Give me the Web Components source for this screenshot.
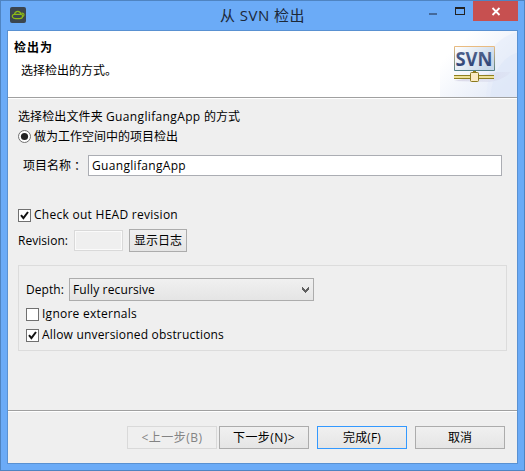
<!DOCTYPE html>
<html lang="zh-CN">
<head>
<meta charset="utf-8">
<title>从 SVN 检出</title>
<style>
body{margin:0;width:525px;height:471px;overflow:hidden;font:12px/16px "Open Sans","Noto Sans CJK SC",sans-serif;color:#000}
</style>
</head>
<body>
<checkout-dialog></checkout-dialog>
<script>
function define(name, html, setup) {
  const t = document.createElement('template');
  t.innerHTML = html;
  customElements.define(name, class extends HTMLElement {
    connectedCallback() {
      if (this.shadowRoot) return;
      this.attachShadow({mode: 'open'}).append(t.content.cloneNode(true));
      if (setup) setup(this, this.shadowRoot);
    }
  });
}

// A single line of text, tracked so that it fills the width given in its "w" attribute.
define('ui-label', `<style>
:host{display:block;white-space:pre;flex:none;height:16px}
span{display:inline-block}
</style><span><slot></slot></span>`, (host, root) => {
  const w = +host.getAttribute('w');
  if (!w) return;
  const span = root.querySelector('span');
  const extra = w - span.getBoundingClientRect().width;
  span.style.letterSpacing = extra / host.textContent.length + 'px';
  host.style.width = w + 'px';
});

define('ui-button', `<style>
:host{display:flex;flex:none;box-sizing:border-box;width:90px;height:23px;border:1px solid #acacac;
background:linear-gradient(#f0f0f0,#e5e5e5);align-items:center;justify-content:center}
:host([primary]){border-color:#3399ff}
:host([disabled]){border-color:#d9d9d9;background:#efefef;color:#838383}
</style><slot></slot>`);

define('ui-check', `<style>
:host{display:flex;height:16px;align-items:center;gap:3px}
i{display:block;box-sizing:border-box;width:13px;height:13px;border:1px solid #707070;background:#fff;flex:none}
svg{display:none;width:11px;height:11px}
:host([checked]) svg{display:block}
</style><i><svg viewBox="0 0 11 11"><path d="M2 5.2 4.4 8.2 9 2" fill="none" stroke="#111" stroke-width="2"/></svg></i><slot></slot>`);

define('ui-radio', `<style>
:host{display:flex;height:16px;align-items:center;gap:3px}
svg{display:block;width:13px;height:13px;flex:none;margin-top:-2px}
</style><svg viewBox="0 0 13 13"><circle cx="6.5" cy="6.5" r="6" fill="#fff" stroke="#707070"/><circle cx="6.5" cy="6.5" r="3.6" fill="#222"/></svg><slot></slot>`);

define('ui-input', `<style>
:host{display:flex;flex:none;box-sizing:border-box;height:21px;border:1px solid #abadb3;background:#fff;padding-left:3px;align-items:center}
:host([disabled]){border-color:#d9d9d9;background:#efefef;box-shadow:inset 0 0 0 1px #fafafa}
</style><slot></slot>`);

define('ui-combo', `<style>
:host{display:flex;flex:none;box-sizing:border-box;width:245px;height:23px;border:1px solid #acacac;padding:0 4px 0 3px;
background:linear-gradient(#f0f0f0,#e5e5e5);align-items:center;justify-content:space-between}
svg{display:block;width:7px;height:6px}
</style><slot></slot><svg viewBox="0 0 7 6"><path d="M0 0h1v1h1v1h1v1h1V2h1V1h1V0h1v3H6v1H5v1H4v1H3V5H2V4H1V3H0z" fill="#606060"/></svg>`);

define('app-icon', `<style>:host,svg{display:block;width:16px;height:16px}</style>
<svg viewBox="0 0 16 16"><rect width="16" height="16" rx="2" fill="#3b4650"/>
<g fill="none" stroke="#8dbb16" stroke-width="1.2"><path d="M4.3 7.4C2.2 7.7 1.9 9.2 2.6 10.2c.6 1 1.700 1.400 3 1.400h4c1.900 0 3-1 3-2.600 0-1.100-.8-1.600-2-1.600z"/><path d="M4.500 7.400C4.800 5.300 6 4.300 7.700 4.300s2.900 1 3.100 3.100"/><path d="M11.300 6.300c1.500-.4 2.700.3 2.700 1.500 0 1.100-.6 1.700-1.500 2"/></g></svg>`);

define('window-controls', `<style>
:host{display:block;width:90px;height:20px}svg{display:block}
</style><svg width="90" height="20" viewBox="0 0 90 20"><path d="M1 12h8v2H1z" fill="#44699a"/>
<path d="M27 6h10v8H27zM28 8v5h8V8z" fill="#222" fill-rule="evenodd"/><path d="M45 0h45v20H45z" fill="#c75050"/>
<path d="m64.5 7 7 7m0-7-7 7" stroke="#fff" stroke-width="1.8"/></svg>`);

define('title-bar', `<style>
:host{display:grid;height:29px;grid-template-columns:210px 1fr 90px;padding:0 6px 0 9px;align-items:start;color:#1c2838}
app-icon{margin-top:6px}
ui-label{font-size:15px;line-height:20px;height:20px;margin-top:4px}
</style><app-icon></app-icon><ui-label w="85">从 SVN 检出</ui-label><window-controls></window-controls>`);

define('svn-banner', `<style>:host,svg{display:block;width:77px;height:66px}
text{font:bold 19.5px "Open Sans",sans-serif}</style>
<svg viewBox="0 0 77 66"><defs>
<linearGradient id="bg" x1=".15" x2="1" y1=".3" y2="1"><stop offset="0" stop-color="#fff"/><stop offset="1" stop-color="#dfe7f7"/></linearGradient>
<linearGradient id="bx" x2="1" y2="0.5"><stop offset="0" stop-color="#fff"/><stop offset="1" stop-color="#c9d8ea"/></linearGradient>
<linearGradient id="bd" x2="0" y2="1"><stop offset="0" stop-color="#e9bb80"/><stop offset="1" stop-color="#548187"/></linearGradient>
<linearGradient id="sh"><stop offset="0" stop-color="#cbc7dd"/><stop offset="1" stop-color="#d8dbee" stop-opacity=".5"/></linearGradient>
<linearGradient id="tx" x2="0" y2="1"><stop offset="0" stop-color="#5c6d94"/><stop offset="1" stop-color="#23386f"/></linearGradient>
</defs>
<path d="M0 0h77v66H0z" fill="url(#bg)"/>
<path d="M77 1C66 4 58 10 53 17L46 66h31z" fill="#e3ebfa" opacity=".55"/>
<path d="M77 22C66 25 60 33 54 45l-4 21h27z" fill="#dce5f8" opacity=".5"/>
<path d="M14 50 57 41h14c-5 5-12 9-22 10z" fill="url(#sh)" opacity=".65"/>
<path d="M14.5 15.5h40v24h-40z" fill="url(#bx)" stroke="url(#bd)"/>
<text x="15.5" y="35.3" textLength="37" lengthAdjust="spacingAndGlyphs" fill="url(#tx)">SVN</text>
<path d="M14 44h40v4H14z" fill="#8f8020"/><path d="M14 45h40v2H14z" fill="#eee198"/>
<path d="M33 40h3v2h-3z" fill="#8f8020"/><rect x="30.5" y="41.5" width="8" height="9" rx="1" fill="#fbebc4" stroke="#8b7a1d"/>
</svg>`);

define('dialog-header', `<style>
:host{display:flex;height:66px;background:#fff;border-bottom:1px solid #a0a0a0;box-shadow:0 1px #fff;justify-content:space-between}
.t{padding:9px 0 0 6px}
.b{font-weight:bold}.d{margin:7px 0 0 7px}
</style><div class="t"><ui-label class="b" w="39">检出为</ui-label><ui-label class="d">选择检出的方式。</ui-label></div><svn-banner></svn-banner>`);

define('depth-group', `<style>
:host{display:block;box-sizing:border-box;width:489px;height:86px;border:1px solid #dcdcdc;padding:12px 0 0 7px}
.r{display:flex;align-items:center;height:23px;gap:5px}
ui-check{margin-top:5px}
</style><div class="r"><ui-label w="38">Depth:</ui-label><ui-combo><ui-label w="82">Fully recursive</ui-label></ui-combo></div>
<ui-check><ui-label w="95">Ignore externals</ui-label></ui-check>
<ui-check checked><ui-label w="182">Allow unversioned obstructions</ui-label></ui-check>`);

define('dialog-body', `<style>
:host{display:block;box-sizing:border-box;height:312px;padding:11px 0 0 10px}
.r{display:flex;align-items:center}
.path{height:16px}ui-radio{margin-top:4px}
.name{height:21px;margin:10px 0 0 5px;gap:5px}
.colon{font-family:"Noto Sans CJK TC",sans-serif;margin-left:-5px}
.head{margin-top:31px}
.rev{height:23px;margin-top:6px;gap:6px}
depth-group{margin-top:13px}
</style>
<div class="r path"><ui-label w="88">选择检出文件夹 </ui-label><ui-label w="98">GuanglifangApp </ui-label><ui-label>的方式</ui-label></div>
<ui-radio><ui-label>做为工作空间中的项目检出</ui-label></ui-radio>
<div class="r name"><ui-label w="48">项目名称</ui-label><ui-label class="colon" w="12" lang="zh-TW">：</ui-label><ui-input style="width:414px"><ui-label w="94">GuanglifangApp</ui-label></ui-input></div>
<ui-check class="head" checked><ui-label w="144">Check out HEAD revision</ui-label></ui-check>
<div class="r rev"><ui-label w="50">Revision:</ui-label><ui-input disabled style="width:49px"></ui-input><ui-button style="width:58px"><ui-label>显示日志</ui-label></ui-button></div>
<depth-group></depth-group>`);

define('dialog-actions', `<style>
:host{display:flex;box-sizing:border-box;height:53px;border-top:1px solid #a0a0a0;box-shadow:inset 0 1px #fff;padding:15px 12px 0 0;justify-content:flex-end}
.n{margin-left:2px}.g{margin-left:8px}
</style><ui-button disabled><ui-label w="61">&lt;上一步(B)</ui-label></ui-button><ui-button class="n"><ui-label w="62">下一步(N)&gt;</ui-label></ui-button>
<ui-button class="g" primary><ui-label w="38">完成(F)</ui-label></ui-button><ui-button class="g"><ui-label>取消</ui-label></ui-button>`);

define('checkout-dialog', `<style>
:host{display:block;box-sizing:border-box;width:525px;height:471px;border:1px solid #4f84c1;background:#6babf7}
.c{box-sizing:border-box;width:511px;height:434px;margin-left:6px;border:1px solid #5991d2;background:#efefef}
</style><title-bar></title-bar><div class="c"><dialog-header></dialog-header><dialog-body></dialog-body><dialog-actions></dialog-actions></div>`);
</script>
</body>
</html>
